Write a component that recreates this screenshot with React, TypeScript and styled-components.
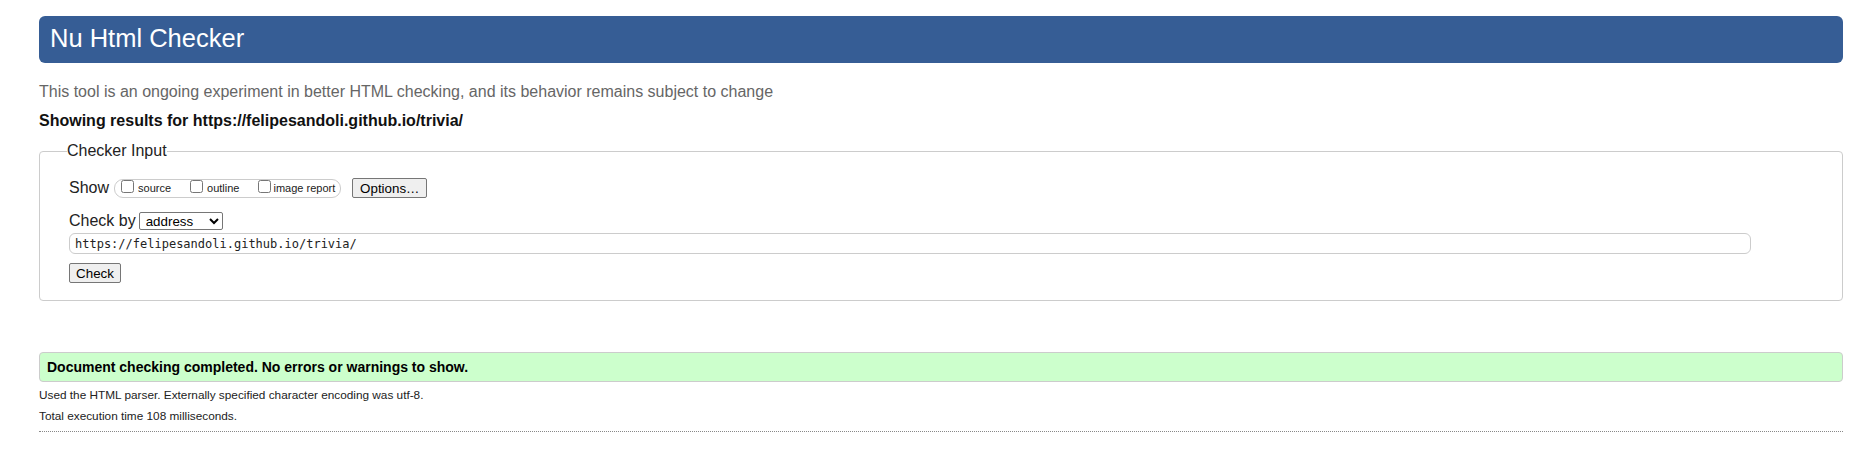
import React from 'react';
import styled, { createGlobalStyle } from 'styled-components';

const GlobalStyle = createGlobalStyle`
  body {
    margin: 0;
    background: #fff;
    font-family: "Liberation Sans", Arial, sans-serif;
    color: #222;
  }
`;

const Page = styled.div`
  padding: 16px 22px 0 39px;
`;

const Header = styled.h1`
  margin: 0;
  padding: 8px 10px 10px 11px;
  background: #365d95;
  color: #fff;
  border-radius: 6px;
  font-size: 25.5px;
  font-weight: normal;
  line-height: 29px;
`;

const Intro = styled.p`
  margin: 20px 0 0;
  font-size: 16px;
  line-height: 18px;
  color: #666;
`;

const ResultsFor = styled.p`
  margin: 11px 0 0;
  font-size: 16px;
  line-height: 18px;
  font-weight: bold;
  color: #111;
`;

const Fieldset = styled.fieldset`
  margin: 12px 0 0;
  padding: 18px 29px 17px;
  border: 1px solid #ccc;
  border-radius: 4px;
`;

const Legend = styled.legend`
  margin-left: -2px;
  padding: 0;
  font-size: 16px;
  line-height: 18px;
  color: #222;
`;

const Row = styled.div<{ $gap?: number; $mt?: number }>`
  display: flex;
  align-items: center;
  height: 20px;
  gap: ${p => p.$gap ?? 5}px;
  margin-top: ${p => p.$mt ?? 0}px;
`;

const Label = styled.span`
  font-size: 16px;
  line-height: 18px;
  color: #222;
`;

const OptionGroup = styled.div`
  box-sizing: border-box;
  display: flex;
  align-items: flex-start;
  height: 19px;
  padding: 0 5px 0 6px;
  border: 1px solid #ccc;
  border-radius: 9px;
  margin-right: 6px;
`;

const Option = styled.label<{ $gap?: number }>`
  display: flex;
  align-items: flex-start;
  gap: ${p => p.$gap ?? 4}px;
  margin-right: 19px;
  &:last-child {
    margin-right: 0;
  }
`;

const Checkbox = styled.input`
  width: 13px;
  height: 13px;
  margin: 0;
`;

const OptionText = styled.span`
  font-size: 11px;
  line-height: 17px;
  color: #222;
`;

const Button = styled.button<{ $width: number }>`
  box-sizing: border-box;
  width: ${p => p.$width}px;
  height: 20px;
  padding: 0;
  font-family: "Liberation Sans", Arial, sans-serif;
  font-size: 13.33px;
  color: #000;
  background: #efefef;
  border: 1px solid #767676;
  border-radius: 2px;
`;

const Select = styled.select`
  box-sizing: border-box;
  width: 84px;
  height: 18px;
  padding: 0 2px;
  font-family: "Liberation Sans", Arial, sans-serif;
  font-size: 13.33px;
  color: #000;
  border: 1px solid #767676;
  border-radius: 2px;
  background: #fff;
`;

const UrlInput = styled.input`
  box-sizing: border-box;
  display: block;
  width: 1682px;
  height: 21px;
  margin-top: 2px;
  padding: 0 5px;
  font-family: "DejaVu Sans Mono", "Liberation Mono", monospace;
  font-size: 12px;
  color: #222;
  border: 1px solid #ccc;
  border-radius: 6px;
`;

const CheckRow = styled.div`
  margin-top: 9px;
  height: 20px;
`;

const Success = styled.div`
  margin-top: 51px;
  box-sizing: border-box;
  height: 30px;
  padding: 6px 7px;
  background: #ccffcc;
  border: 1px solid #ccc;
  border-radius: 4px;
  font-size: 14px;
  line-height: 16px;
  font-weight: bold;
  color: #000;
`;

const Detail = styled.p<{ $mt?: number }>`
  margin: ${p => p.$mt ?? 0}px 0 0;
  font-size: 11.8px;
  line-height: 21px;
  color: #222;
`;

const Divider = styled.div`
  margin-top: 4px;
  border-top: 1px dotted #888;
`;

export default function App() {
  const url = 'https://felipesandoli.github.io/trivia/';
  return (
    <Page>
      <GlobalStyle />
      <Header>Nu Html Checker</Header>
      <Intro>
        This tool is an ongoing experiment in better HTML checking, and its behavior remains subject to change
      </Intro>
      <ResultsFor>Showing results for {url}</ResultsFor>
      <Fieldset>
        <Legend>Checker Input</Legend>
        <Row>
          <Label>Show</Label>
          <OptionGroup>
            <Option>
              <Checkbox type="checkbox" />
              <OptionText>source</OptionText>
            </Option>
            <Option>
              <Checkbox type="checkbox" />
              <OptionText>outline</OptionText>
            </Option>
            <Option $gap={2}>
              <Checkbox type="checkbox" />
              <OptionText>image report</OptionText>
            </Option>
          </OptionGroup>
          <Button $width={75}>Options…</Button>
        </Row>
        <Row $gap={3} $mt={13}>
          <Label>Check by</Label>
          <Select defaultValue="address">
            <option value="address">address</option>
            <option value="file">file upload</option>
            <option value="text">text input</option>
          </Select>
        </Row>
        <UrlInput type="url" defaultValue={url} />
        <CheckRow>
          <Button $width={52}>Check</Button>
        </CheckRow>
      </Fieldset>
      <Success>Document checking completed. No errors or warnings to show.</Success>
      <Detail $mt={3}>Used the HTML parser. Externally specified character encoding was utf-8.</Detail>
      <Detail>Total execution time 108 milliseconds.</Detail>
      <Divider />
    </Page>
  );
}
